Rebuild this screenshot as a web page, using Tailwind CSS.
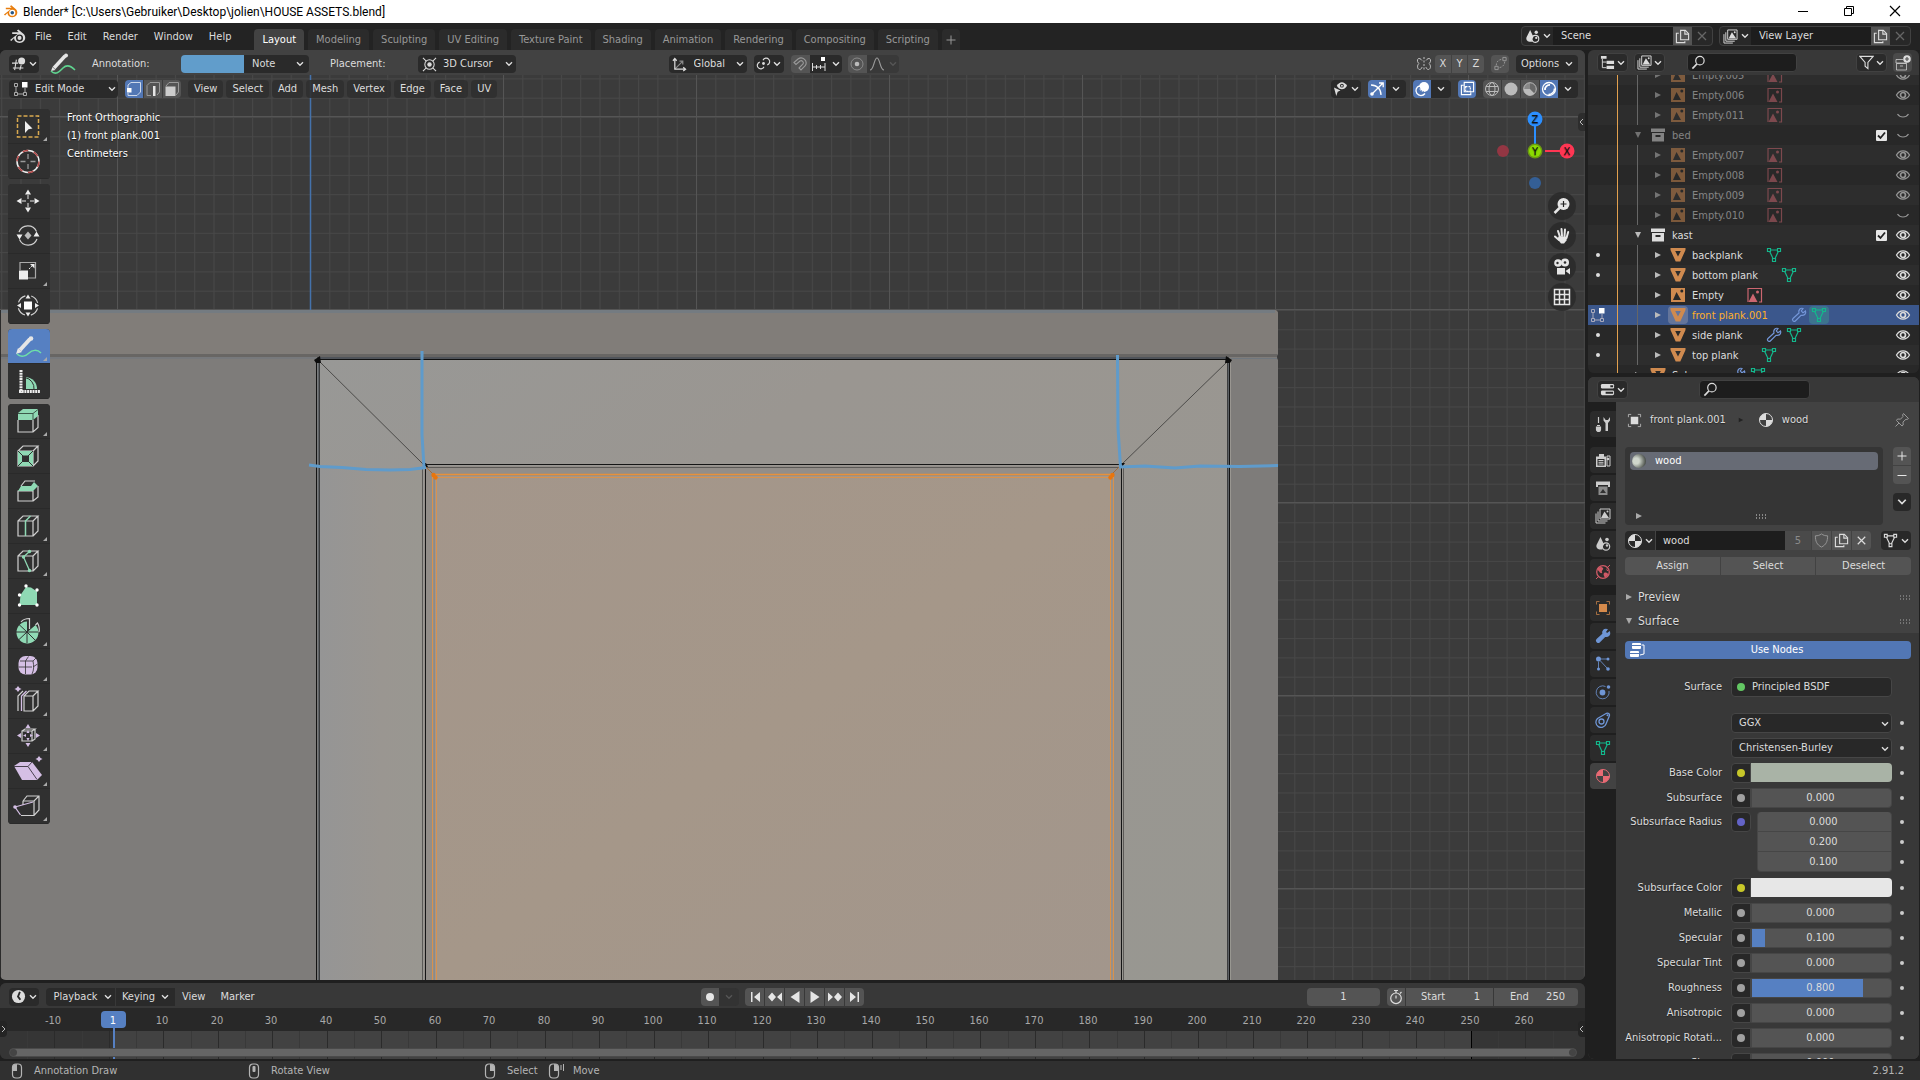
<!DOCTYPE html>
<html lang="en">
<head>
<meta charset="utf-8">
<title>Blender* [C:\Users\Gebruiker\Desktop\jolien\HOUSE ASSETS.blend]</title>
<script src="https://cdn.jsdelivr.net/npm/@tailwindcss/browser@4"></script>
</head>
<body class="h-screen overflow-hidden bg-[#1f1f1f] flex flex-col font-['DejaVu_Sans_Condensed','DejaVu_Sans',sans-serif] text-[11px] leading-[14px] text-[#dcdcdc]">

<!-- shared icon symbols -->
<svg class="hidden" aria-hidden="true">
  <defs>
    <symbol id="chev" viewBox="0 0 8 6"><path d="M1 1.2l3 3 3-3" fill="none" stroke="currentColor" stroke-width="1.4"/></symbol>
    <symbol id="logo" viewBox="0 0 16 16"><path d="M1 11.2L8.2 5.6H3V4h6.2L7.4 2.4 8.8 1.4l5 4.3c3 3 1.200 8.400-3.800 8.400-3.200 0-5.200-2-5.200-4.600L2.200 12.300z" fill="currentColor"/><circle cx="9.900" cy="9.300" r="3.300" fill="var(--ring,#232323)"/><circle cx="9.900" cy="9.300" r="1.900" fill="var(--dot,currentColor)"/></symbol>
    <symbol id="view3d" viewBox="0 0 16 16"><path d="M0 7h7M1 12.500h12M5 3L3 15M10.500 9L9 15" stroke="currentColor" stroke-width="1.200" fill="none"/><circle cx="11" cy="4.500" r="4" fill="currentColor"/></symbol>
    <symbol id="cursor3d" viewBox="0 0 16 16"><g fill="none" stroke="currentColor" stroke-width="1.100"><circle cx="8" cy="8" r="5"/><path d="M1 1l3.500 3.500M15 1l-3.500 3.500M1 15l3.500-3.500M15 15l-3.500-3.500"/></g><circle cx="8" cy="8" r="2.400" fill="currentColor"/></symbol>
    <symbol id="editmode" viewBox="0 0 16 16"><g fill="none" stroke="currentColor" stroke-width="1"><path d="M1.500 2.500h3v3h-3zM1.500 11.500h3v3h-3zM10.500 11.500h3v3h-3zM3 6v5M5 13h5M12 7v4"/></g><path d="M9 1h5.500v5.500H9z" fill="#fff"/></symbol>
    <symbol id="axes" viewBox="0 0 16 16"><g fill="none" stroke="currentColor" stroke-width="1.300"><path d="M3 2v11h11M1 4l2-2.500L5 4M12 11l2.500 2L12 15"/><path d="M3 13l8-8M8 4.500h3.500V8" opacity=".55"/></g></symbol>
    <symbol id="pivot" viewBox="0 0 16 16"><g fill="none" stroke="currentColor" stroke-width="1.200"><path d="M7.500 4.500A3.700 3.700 0 1 1 12 9.500"/><path d="M8.500 11.500A3.700 3.700 0 1 1 4 6.500"/></g><circle cx="8" cy="8" r="1.500" fill="currentColor"/></symbol>
    <symbol id="magnet" viewBox="0 0 16 16"><path d="M2 6.500L6 3a5 5 0 0 1 7 7l-4 4-2-2 4-4a2.200 2.200 0 0 0-3-3L4 8.500z" fill="none" stroke="currentColor" stroke-width="1.100"/></symbol>
    <symbol id="snapinc" viewBox="0 0 16 16"><path d="M1.500 7v8M14 7v8M1.500 11H14M5.500 9v4M9.500 9v4" fill="none" stroke="currentColor" stroke-width="1"/><path d="M10 1h4v4h-4z" fill="#fff"/></symbol>
    <symbol id="prop" viewBox="0 0 16 16"><circle cx="8" cy="8" r="6" fill="none" stroke="currentColor" opacity=".5"/><circle cx="8" cy="8" r="2.300" fill="currentColor"/></symbol>
    <symbol id="falloff" viewBox="0 0 16 16"><path d="M1 14C5 14 5 2 8 2s3 12 7 12" fill="none" stroke="currentColor" stroke-width="1.200"/></symbol>
    <symbol id="mirror" viewBox="0 0 16 16"><g fill="none" stroke="currentColor"><path d="M6 4.500C4 1.500 1 2 1.500 5c0 1 .8 2 1.500 2.500C1 9 1 13 3.500 13.500 5 13.500 6 12 6 11M10 4.500c2-3 5-2.500 4.500.5 0 1-.8 2-1.500 2.500 2 1.500 2 5.500-.5 6-1.500 0-2.500-1.500-2.500-2.500"/><path d="M8 1v14" stroke-dasharray="2 1.500"/></g></symbol>
    <symbol id="automerge" viewBox="0 0 16 16"><g fill="none" stroke="currentColor"><path d="M10.500 1.500h3.500v3.500h-3.500zM2 11h3.500v3.500H2z"/><path d="M12.500 6C12 11 9 12 6.500 12.500M3.500 10C3.500 6 6 4 9.500 3.500" stroke-dasharray="2 1.500"/></g></symbol>
    <symbol id="eye" viewBox="0 0 16 12"><path d="M1.500 6c3-5.500 10-5.500 13 0-3 5.500-10 5.500-13 0z" fill="none" stroke="currentColor" stroke-width="1.300"/><circle cx="8" cy="6" r="2.500" fill="none" stroke="currentColor" stroke-width="1.700"/></symbol>
    <symbol id="eyeclosed" viewBox="0 0 16 12"><path d="M2.500 5c2.500 4 8.500 4 11 0" fill="none" stroke="currentColor" stroke-width="1.200"/></symbol>
    <symbol id="eyecursor" viewBox="0 0 16 16"><path d="M4 5c3-5 8-5 11 0-3 5-8 5-11 0z" fill="currentColor"/><circle cx="9.500" cy="5" r="2" fill="#282828"/><circle cx="9.500" cy="5" r="1" fill="currentColor"/><path d="M1 7l7 3-3 1.500L3.500 16z" fill="currentColor"/></symbol>
    <symbol id="gizmo" viewBox="0 0 16 16"><g fill="none" stroke="currentColor" stroke-width="1.300"><path d="M3 13L14 2M10 2h4.200v4.200"/><path d="M2 4c6 0 10 4 10 10"/></g><circle cx="3" cy="13" r="1.800" fill="currentColor"/></symbol>
    <symbol id="overlay" viewBox="0 0 16 16"><circle cx="10" cy="6" r="5" fill="currentColor"/><path d="M5.500 4.800A5 5 0 1 0 11 12.500" fill="none" stroke="currentColor" stroke-width="1.300"/><path d="M5.500 6a4.500 4.500 0 0 0 4.500 4.500" stroke="#5277b5" fill="none" stroke-dasharray="2 1"/></symbol>
    <symbol id="xray" viewBox="0 0 16 16"><g fill="none" stroke="currentColor" stroke-width="1.200"><path d="M4.500 1.500h10v10h-10z"/><path d="M4 4.500H1.500v10h10V12"/><path d="M6 6h5v5H6z" stroke-dasharray="2 1"/></g></symbol>
    <symbol id="wire" viewBox="0 0 16 16"><g fill="none" stroke="currentColor"><circle cx="8" cy="8" r="6.500"/><ellipse cx="8" cy="8" rx="3" ry="6.500"/><path d="M2 5.500h12M2 10.500h12"/></g></symbol>
    <symbol id="solid" viewBox="0 0 16 16"><circle cx="8" cy="8" r="6.500" fill="currentColor"/></symbol>
    <symbol id="matprev" viewBox="0 0 16 16"><circle cx="8" cy="8" r="6.300" fill="none" stroke="currentColor"/><path d="M8 8V1.700A6.300 6.300 0 0 0 1.700 8z" fill="currentColor" opacity=".5"/><path d="M8 8V1.700A6.300 6.300 0 0 1 12.500 12.500z" fill="currentColor" opacity=".2"/><path d="M1.700 8H8l4.500 4.500A6.300 6.300 0 0 1 1.700 8z" fill="currentColor"/></symbol>
    <symbol id="rendered" viewBox="0 0 16 16"><circle cx="8" cy="8" r="6.500" fill="none" stroke="currentColor" stroke-width="1.300"/><path d="M4 9a4.500 4.500 0 0 1 5-5" fill="none" stroke="currentColor" stroke-width="1.800"/><path d="M13.500 7.500a6 6 0 0 1-6 6" stroke="currentColor" stroke-width="1.500" fill="none"/></symbol>
    <symbol id="scene" viewBox="0 0 16 16"><path d="M5.500 1L9 8.500C8 10 7 11 7.500 13.500H4.500A3.500 3.500 0 0 1 1.500 9z" fill="currentColor"/><circle cx="11" cy="10.500" r="3.700" fill="none" stroke="currentColor" stroke-width="1.200"/><circle cx="12" cy="3.500" r="1.800" fill="currentColor"/><circle cx="12" cy="9.500" r="1.200" fill="currentColor"/></symbol>
    <symbol id="layers" viewBox="0 0 16 16"><path d="M5 1h10v10H5z" fill="none" stroke="currentColor"/><path d="M6 10l3.500-6.500L14 10z" fill="currentColor"/><circle cx="12.500" cy="3.500" r="1" fill="currentColor"/><path d="M3 3.500v9.500h9.500M1 5.500V15h9.500" fill="none" stroke="currentColor"/></symbol>
    <symbol id="dup" viewBox="0 0 16 16"><g fill="none" stroke="currentColor" stroke-width="1.200"><path d="M6 1.500h5l3.500 3.500v6.500H6z"/><path d="M10.500 2v3.500H14"/><path d="M4 4.500H1.500v10h9V13"/></g></symbol>
    <symbol id="x" viewBox="0 0 16 16"><path d="M4 4l8 8M12 4l-8 8" stroke="currentColor" stroke-width="1.300" fill="none"/></symbol>
    <symbol id="tree" viewBox="0 0 16 16"><path d="M1 1h6v3H1zM7 6h8v3.500H7zM7 11.500h8V15H7z" fill="currentColor"/><path d="M2.500 4v9.500H7M2.500 7.500H7" stroke="currentColor" fill="none"/></symbol>
    <symbol id="search" viewBox="0 0 16 16"><circle cx="9.500" cy="6" r="4.500" fill="none" stroke="currentColor" stroke-width="1.300"/><path d="M6.300 9.500L1.500 14.500" stroke="currentColor" stroke-width="1.700"/></symbol>
    <symbol id="filter" viewBox="0 0 16 16"><path d="M1 1.500h14L9.500 8v6.500L6.500 12V8z" fill="none" stroke="currentColor" stroke-width="1.200"/></symbol>
    <symbol id="newcoll" viewBox="0 0 16 16"><path d="M1.500 8.500h10v6.500h-10zM1 4.500h7M1 4.500v3.500h11M5 11h3" fill="none" stroke="currentColor" opacity=".7"/><circle cx="12" cy="4" r="3.800" fill="currentColor"/><path d="M12 2v4M10 4h4" stroke="#545454" stroke-width="1.200"/></symbol>
    <symbol id="coll" viewBox="0 0 16 16"><path d="M1 1.500h14v3.500H1z" fill="currentColor"/><path fill-rule="evenodd" d="M2 6h12v8.500H2zM5.500 8v2h5V8z" fill="currentColor"/></symbol>
    <symbol id="empty" viewBox="0 0 16 16"><path fill-rule="evenodd" d="M1 1h14v14H1zM3 13h8L6.500 5z" fill="currentColor"/><circle cx="11.800" cy="4" r="1.500" fill="#282828"/></symbol>
    <symbol id="image" viewBox="0 0 16 16"><path d="M1 15V1.500h13.500V15H12" fill="none" stroke="currentColor" stroke-width="1.200"/><path d="M1.500 15L6 6.500 10.500 15z" fill="currentColor"/><circle cx="10.500" cy="5" r="1.500" fill="currentColor"/></symbol>
    <symbol id="meshobj" viewBox="0 0 16 16"><path fill-rule="evenodd" d="M.5 1h15v2L10.300 14.500H5.700L.5 3zM5.200 4L8 9.500 10.800 4z" fill="currentColor"/></symbol>
    <symbol id="mesh" viewBox="0 0 16 16"><g fill="none" stroke="currentColor" stroke-width="1.200"><path d="M1.500 1.500h3v3h-3zM11.500 1.500h3v3h-3zM6.500 11.500h3v3h-3zM4.500 3h7M3.700 4.500l3.300 7M12.300 4.500l-3.300 7"/></g></symbol>
    <symbol id="wrench" viewBox="0 0 16 16"><path d="M14.500 4L12 5.800 10.300 4 12 1.500C9.500.5 7 3 8 6L2 11.500c-1.500 1.500.8 4 2.300 2.500L10 8.300c3 .7 5.500-1.500 4.500-4.300z" fill="var(--wf,none)" stroke="currentColor" stroke-width="1.200"/></symbol>
    <symbol id="props" viewBox="0 0 16 16"><rect x="1" y="2" width="14" height="5" rx="1.500" fill="currentColor"/><rect x="1" y="9" width="14" height="5" rx="1.500" fill="currentColor"/><path d="M11 3.500h3v2h-3zM6 10.500h8v2H6z" fill="#282828"/></symbol>
    <symbol id="material" viewBox="0 0 16 16"><circle cx="8" cy="8" r="6.500" fill="none" stroke="currentColor"/><path d="M8 8V1.500A6.500 6.500 0 0 0 1.500 8zM8 8h6.500A6.500 6.500 0 0 1 8 14.500z" fill="currentColor"/></symbol>
    <symbol id="object" viewBox="0 0 16 16"><path d="M4 4h8v8H4z" fill="currentColor"/><path d="M1.500 4.500v-3h3M11.500 1.500h3v3M14.500 11.500v3h-3M4.500 14.500h-3v-3" fill="none" stroke="currentColor" opacity=".7"/></symbol>
    <symbol id="pin" viewBox="0 0 16 16"><path d="M9.500 1.500l5 5-1.500 1-1-.3L9 10l.2 3L8 14 2.500 8.500 3.500 7l3 .2L9 4.500 8.600 3zM5 11L1.500 14.500" fill="none" stroke="currentColor"/></symbol>
    <symbol id="shield" viewBox="0 0 16 16"><path d="M8 1c2 1.500 4 2 6.500 2 0 6-1.500 9.500-6.500 12C3 12.500 1.500 9 1.500 3 4 3 6 2.500 8 1z" fill="none" stroke="currentColor"/></symbol>
    <symbol id="tool" viewBox="0 0 16 16"><path d="M3.500 1v6M2 9.500h3M1.500 11h4v2.500a2 2 0 0 1-4 0z" stroke="currentColor" stroke-width="1.200" fill="currentColor"/><path d="M8.500 1v3.500L10.500 7v8h2.500V7l2-2.500V1L13 4h-2.300z" fill="currentColor"/></symbol>
    <symbol id="render" viewBox="0 0 16 16"><path fill-rule="evenodd" d="M1 4.500h3V2h5v2.500h2V15H1zM2.500 7v6.500h7V7z" fill="currentColor"/><path d="M3.500 8.500h5M3.500 10.300h5M3.500 12h5" stroke="currentColor"/><path d="M12 4h3v10h-3z" fill="none" stroke="currentColor"/><circle cx="13" cy="7" r="1.300" fill="currentColor"/></symbol>
    <symbol id="output" viewBox="0 0 16 16"><path d="M1 1.500h14V7h-2V5H3v2H1z" fill="currentColor"/><path d="M3.500 6.500h9V15h-9z" fill="currentColor" opacity=".6"/><path d="M5 13l3-4 3 4z" fill="#303030"/></symbol>
    <symbol id="world" viewBox="0 0 16 16"><circle cx="8" cy="8" r="6.300" fill="none" stroke="currentColor" stroke-width="1.300"/><path d="M3 4c2-1.500 4-1.500 5 0s-2 2.500-1 4-2 1.500-2.500 0S2 7 3 4zM9 9c2-1 4 0 4 1.500S10 14 9.500 13 8 10 9 9zM11 4l2.500 3L12 7z" fill="currentColor"/><path d="M13 3l2-2M1 15l2-2" stroke="currentColor"/></symbol>
    <symbol id="particles" viewBox="0 0 16 16"><circle cx="3.500" cy="3" r="2.500" fill="currentColor"/><g stroke="currentColor" fill="none" opacity=".8"><path d="M3.500 5.500V12M5.500 3H12M5.500 5l6.500 7"/></g><circle cx="3.500" cy="13" r="1.500" fill="currentColor"/><circle cx="13" cy="3" r="1.500" fill="currentColor"/><circle cx="13" cy="13" r="1.800" fill="currentColor"/></symbol>
    <symbol id="physics" viewBox="0 0 16 16"><circle cx="7.500" cy="8.500" r="2.900" fill="currentColor"/><path d="M10.500 2.500a6.500 6.500 0 1 0 3.500 4.500" fill="none" stroke="currentColor" opacity=".8"/><circle cx="13.500" cy="3" r="1.800" fill="currentColor"/></symbol>
    <symbol id="constraint" viewBox="0 0 16 16"><g fill="none" stroke="currentColor" stroke-width="1.300"><path d="M2.500 6.500L11.500 1.300c2-.8 3.500 1 2.800 2.700L11 12a5.200 5.200 0 1 1-8.500-5.500z"/><circle cx="6.500" cy="9.500" r="2.500"/></g><circle cx="12.500" cy="3.200" r="1" fill="currentColor"/></symbol>
    <symbol id="nodes" viewBox="0 0 16 16"><rect x="3" y="1" width="9" height="6" rx="1" fill="currentColor"/><rect x="1" y="9" width="9" height="6" rx="1" fill="currentColor"/><path d="M12.500 3H15v9l-4 1" fill="none" stroke="currentColor"/><path d="M3 3.500h9M1 11.500h9" stroke="#5277b5"/></symbol>
    <symbol id="clock" viewBox="0 0 16 16"><circle cx="8" cy="8" r="7" fill="currentColor"/><path d="M9.500 3L7.500 8l2.500 3.500" fill="none" stroke="#282828" stroke-width="2"/></symbol>
    <symbol id="stopwatch" viewBox="0 0 16 16"><g fill="none" stroke="currentColor" stroke-width="1.200"><circle cx="8" cy="9.300" r="5.300"/><path d="M8 9.500V6.500M6 1.500h4M8 1.500v2.500M12 4.500l1.500-1.500"/></g></symbol>
    <symbol id="mouse" viewBox="0 0 12 16"><rect x="1.500" y="1" width="9" height="14" rx="3.500" fill="none" stroke="currentColor" stroke-width="1.200"/></symbol>
    <symbol id="tri" viewBox="0 0 8 8"><path d="M1 1l6 3-6 3z" fill="currentColor"/></symbol>
    <symbol id="trid" viewBox="0 0 8 8"><path d="M1 1h6L4 7z" fill="currentColor"/></symbol>
    <symbol id="grip" viewBox="0 0 12 5"><path d="M1 1h10M1 4h10" stroke="currentColor" stroke-dasharray="1 2"/></symbol>
  </defs>
</svg>

<!-- window title -->
<header class="h-[23px] shrink-0 bg-white text-black flex items-center pl-[3px] font-[Roboto,sans-serif] text-[12px]">
  <svg class="size-[15px] mr-[5px] text-[#e87d0d] [--dot:#265787] [--ring:#fff]"><use href="#logo"/></svg>
  <h1>Blender* [C:\Users\Gebruiker\Desktop\jolien\HOUSE ASSETS.blend]</h1>
  <div class="ml-auto flex items-center gap-[34px] pr-[19px] pb-[2px]">
    <button aria-label="Minimize"><svg class="size-[12px]" viewBox="0 0 12 12"><path d="M1 6.500h10" stroke="#000"/></svg></button>
    <button aria-label="Restore"><svg class="size-[12px]" viewBox="0 0 12 12"><path d="M1.500 3.500h7v7h-7zM3.500 3V1.500h7v7H9" fill="none" stroke="#000"/></svg></button>
    <button aria-label="Close"><svg class="size-[12px]" viewBox="0 0 12 12"><path d="M1 1l10 10M11 1L1 11" stroke="#000" stroke-width="1.200"/></svg></button>
  </div>
</header>

<!-- top bar -->
<div class="h-[27px] shrink-0 bg-[#232323] flex items-center pl-[9px] pr-[9px]">
  <svg class="size-[17px] mr-[9px]"><use href="#logo"/></svg>
  <nav class="flex gap-4">
    <button>File</button><button>Edit</button><button>Render</button><button>Window</button><button>Help</button>
  </nav>
  <nav id="tabs" class="ml-[23px] mt-[6px] h-[21px] flex gap-1" role="tablist"></nav>
  <div class="ml-auto flex gap-[6px] mb-px">
    <div class="flex h-5 rounded border border-[#414141] bg-[#282828] overflow-hidden">
      <button class="w-[31px] flex items-center justify-center gap-[3px]" aria-label="Browse scenes"><svg class="size-[15px]"><use href="#scene"/></svg><svg class="w-2 h-[6px]"><use href="#chev"/></svg></button>
      <input aria-label="Scene" value="Scene" class="w-[120px] bg-[#1d1d1d] px-2 outline-none">
      <button class="w-[19px] bg-[#545454] grid place-items-center" aria-label="New scene"><svg class="size-[15px]"><use href="#dup"/></svg></button>
      <button class="w-[20px] grid place-items-center text-[#666]" aria-label="Delete scene"><svg class="size-4"><use href="#x"/></svg></button>
    </div>
    <div class="flex h-5 rounded border border-[#414141] bg-[#282828] overflow-hidden">
      <button class="w-[31px] flex items-center justify-center gap-[3px]" aria-label="Browse view layers"><svg class="size-[15px]"><use href="#layers"/></svg><svg class="w-2 h-[6px]"><use href="#chev"/></svg></button>
      <input aria-label="View Layer" value="View Layer" class="w-[120px] bg-[#1d1d1d] px-2 outline-none">
      <button class="w-[19px] bg-[#545454] grid place-items-center" aria-label="New view layer"><svg class="size-[15px]"><use href="#dup"/></svg></button>
      <button class="w-[20px] grid place-items-center text-[#666]" aria-label="Delete view layer"><svg class="size-4"><use href="#x"/></svg></button>
    </div>
  </div>
</div>

<div class="flex-1 min-h-0 flex gap-[3px] pr-px pb-[2px] bg-[#1f1f1f]">
  <!-- left: viewport and timeline -->
  <div class="flex-1 min-w-0 flex flex-col gap-[3px]">
    <main class="flex-1 min-h-0 flex flex-col rounded-md overflow-hidden bg-[#3b3b3b]">
      <!-- tool settings -->
      <div class="h-[25px] shrink-0 bg-[#424242] flex items-center pl-[9px] pr-[7px] pt-[2px]">
        <div class="flex-1 flex items-center">
          <button class="w-[30px] h-[18px] rounded bg-[#2a2a2a] flex items-center justify-center gap-[3px]" aria-label="Editor type"><svg class="size-[14px]"><use href="#view3d"/></svg><svg class="w-2 h-[6px]"><use href="#chev"/></svg></button>
          <svg class="ml-[11px] w-[26px] h-[22px]" viewBox="0 0 26 22"><path d="M4 15L15 3" stroke="#e6e6e6" stroke-width="3.500"/><path d="M1 18l1.500-4 3 3z" fill="#e6e6e6"/><circle cx="16" cy="2.500" r="2" fill="#e6e6e6"/><path d="M1 18c5 5 9 0 12-3s7-3 12 2" fill="none" stroke="#5fd38f" stroke-width="1.600"/></svg>
          <label for="anno" class="ml-4 w-[89px]">Annotation:</label>
          <input type="text" readonly aria-label="Annotation color" class="w-[63px] h-[18px] rounded-l bg-[#619dcb]">
          <div class="relative"><select id="anno" class="block w-[65px] h-[18px] rounded-r bg-[#2a2a2a] appearance-none pl-2 outline-none"><option>Note</option></select><svg class="absolute right-[5px] top-[6px] w-2 h-[6px] pointer-events-none"><use href="#chev"/></svg></div>
          <label for="place" class="ml-[21px] w-[88px]">Placement:</label>
          <div class="relative"><svg class="absolute left-1 top-[2px] size-[15px]"><use href="#cursor3d"/></svg><select id="place" class="block w-[98px] h-[18px] rounded bg-[#2a2a2a] appearance-none pl-[25px] outline-none"><option>3D Cursor</option></select><svg class="absolute right-[3px] top-[6px] w-2 h-[6px] pointer-events-none"><use href="#chev"/></svg></div>
        </div>
        <div class="flex items-center mr-5">
          <div class="relative"><svg class="absolute left-[3px] top-[2px] size-[15px] z-10"><use href="#axes"/></svg><select aria-label="Transform orientation" class="relative block w-[78px] h-[18px] rounded bg-[#2a2a2a] appearance-none pl-[25px] outline-none"><option>Global</option></select><svg class="absolute right-[3px] top-[6px] w-2 h-[6px] pointer-events-none"><use href="#chev"/></svg></div>
          <button class="ml-[7px] w-[30px] h-[18px] rounded bg-[#2a2a2a] flex items-center justify-center gap-[2px]" aria-label="Pivot point"><svg class="size-[15px]"><use href="#pivot"/></svg><svg class="w-2 h-[6px]"><use href="#chev"/></svg></button>
          <button class="ml-[7px] w-[19px] h-[18px] rounded-l bg-[#545454] grid place-items-center text-[#999]" aria-label="Snap"><svg class="size-4"><use href="#magnet"/></svg></button>
          <button class="w-[32px] h-[18px] rounded-r bg-[#2a2a2a] flex items-center justify-center gap-[5px]" aria-label="Snapping"><svg class="size-4"><use href="#snapinc"/></svg><svg class="w-2 h-[6px]"><use href="#chev"/></svg></button>
          <button class="ml-[6px] w-[19px] h-[18px] rounded-l bg-[#545454] grid place-items-center text-[#bbb]" aria-label="Proportional editing"><svg class="size-4"><use href="#prop"/></svg></button>
          <button class="w-[32px] h-[18px] rounded-r bg-[#393939] flex items-center justify-center gap-[4px] text-[#999]" aria-label="Falloff"><svg class="size-4"><use href="#falloff"/></svg><svg class="w-2 h-[6px] text-[#555]"><use href="#chev"/></svg></button>
        </div>
        <div class="flex-1 flex items-center justify-end">
          <svg class="size-4 text-[#c0c0c0] mr-[3px]"><use href="#mirror"/></svg>
          <div class="flex gap-px"><button class="w-[16px] h-[18px] rounded-l bg-[#545454]">X</button><button class="w-[15px] h-[18px] bg-[#545454]">Y</button><button class="w-[16px] h-[18px] rounded-r bg-[#545454]">Z</button></div>
          <button class="ml-[7px] w-[18px] h-[18px] rounded bg-[#545454] grid place-items-center text-[#999]" aria-label="Auto merge"><svg class="size-[15px]"><use href="#automerge"/></svg></button>
          <button class="ml-[7px] w-[62px] h-[18px] rounded bg-[#2a2a2a] flex items-center justify-center gap-[6px]">Options<svg class="w-2 h-[6px]"><use href="#chev"/></svg></button>
        </div>
      </div>

      <!-- 3D viewport -->
      <div class="relative flex-1 min-h-0">
        <svg class="absolute inset-0 w-full h-full" viewBox="0 75 1585 905" preserveAspectRatio="xMidYMid slice">
          <defs>
            <pattern id="minor" patternUnits="userSpaceOnUse" x="117" y="117" width="19.300" height="19.300"><path d="M.5 0V19.300M0 .5H19.300" stroke="#484848"/></pattern>
            <pattern id="major" patternUnits="userSpaceOnUse" x="117" y="116" width="193" height="193"><path d="M.5 0V193M0 .5H193" stroke="#555"/></pattern>
            <linearGradient id="face" x1="0" y1="0" x2="1" y2="1"><stop offset="0" stop-color="#989896"/><stop offset=".3" stop-color="#9a9691"/><stop offset="1" stop-color="#989791"/></linearGradient>
            <linearGradient id="stile" x1="0" x2="1"><stop offset="0" stop-color="#959595"/><stop offset=".6" stop-color="#9a9691"/><stop offset="1" stop-color="#999791"/></linearGradient>
            <linearGradient id="panel" x1="0" y1="0" x2="1" y2="1"><stop offset="0" stop-color="#a3968b"/><stop offset=".5" stop-color="#a59789"/><stop offset="1" stop-color="#a2968c"/></linearGradient>
          </defs>
          <rect y="75" width="1585" height="905" fill="#3b3b3b"/>
          <rect y="75" width="1585" height="905" fill="url(#minor)"/>
          <rect y="75" width="1585" height="905" fill="url(#major)"/>
          <path d="M310.500 75V310" stroke="#4472ab" stroke-width="1.500"/>
          <path d="M1 310H1274q4 0 4 4V354q-2 3 0 6V980H1z" fill="#7e7c7a"/>
          <path d="M1 310H1274q4 0 4 4V354H1z" fill="#817d79"/>
          <path d="M1 311.500H1275" stroke="#747b81" stroke-width="3"/>
          <path d="M1 355.500H1277" stroke="#686664" stroke-width="3"/>
          <path d="M1 358H316M1231 358.500H1277" stroke="#70777e"/>
          <rect x="317" y="359" width="914" height="621" fill="url(#face)"/>
          <rect x="320" y="468" width="103" height="512" fill="url(#stile)"/>
          <path d="M317 358.500H1229" stroke="#50545a" stroke-width="3"/>
          <path d="M317 359.500H1229" stroke="#111"/>
          <path d="M318.500 360V980M1228.500 360V980" stroke="#5d6165" stroke-width="2"/>
          <path d="M316.500 360V980M1229.500 360V980" stroke="#141414"/>
          <path d="M319.500 360V980M1227.500 360V980" stroke="#3c3d3e"/>
          <rect x="424" y="466" width="698" height="514" fill="#938e89"/>
          <path d="M425 464.500H1122M425.500 464V980M1121.500 464V980" stroke="#151515"/>
          <path d="M425 467.500H1122M422.500 468V980M1123.500 468V980" stroke="#5c5a57"/>
          <rect x="434" y="476" width="679" height="504" fill="url(#panel)"/>
          <path d="M434 474.500H1112" stroke="#e8913a" stroke-width="1.500"/>
          <path d="M436 477.500H1110M432.500 476V980M436.500 478V980M1113.500 476V980M1110.500 478V980" stroke="#d8924e"/>
          <path d="M434.500 478V980M1112 478V980" stroke="#8b8a8a"/>
          <path d="M319 361L424 465M1228 361L1121 465" stroke="#4c4b49"/>
          <path d="M424 465l10 10M1121 465l-10 10" stroke="#a06a3a"/>
          <g fill="#0c0c0c"><path d="M314 360l6-4 1 7h-5zM1232 360l-6-4-1 7h5zM422 463h4l2 4h-3zM1125 463h-4l-2 4h3z"/></g>
          <g fill="#e8750d"><circle cx="433.500" cy="475" r="2.200"/><circle cx="435.500" cy="477.500" r="2.200"/><circle cx="1112.500" cy="475" r="2.200"/><circle cx="1110.500" cy="477.500" r="2.200"/></g>
          <g fill="none" stroke="#5f9bcb" stroke-width="3"><path d="M422 351V435L424 467M309 465l11 1.500 22 1 24 2 24 .5 20-.5 16-2"/><path d="M1117.500 355L1118 428 1120.500 467 1145 466 1175 468 1200 466 1240 466.500 1278 465.500"/></g>
          <path d="M.5 310V980" stroke="#2b2b2b"/>
        </svg>

        <div class="relative h-full flex flex-col [text-shadow:0_1px_1px_#0009]">
          <div class="h-[25px] shrink-0 flex items-center pl-[9px] pr-[7px] pt-[2px]">
            <div class="relative mr-[7px]"><svg class="absolute left-1 top-px size-4 z-10 text-[#aaa]"><use href="#editmode"/></svg><select aria-label="Mode" class="relative block w-[109px] h-[18px] rounded bg-[#2a2a2a] appearance-none pl-[26px] outline-none"><option>Edit Mode</option></select><svg class="absolute right-[2px] top-[6px] w-2 h-[6px] pointer-events-none"><use href="#chev"/></svg></div>
            <div class="flex gap-px h-[18px] mr-[7px]">
              <button class="w-[18px] rounded-l bg-[#5277b5] grid place-items-center" aria-label="Vertex select"><svg class="size-4" viewBox="0 0 16 16"><path d="M2 8V4l3-2.500h9.500V11L11 14.500H2V12" fill="none" stroke="#cdd8ea"/><path d="M1 7h4.500v4.500H1z" fill="#fff"/></svg></button>
              <button class="w-[18px] bg-[#545454] grid place-items-center" aria-label="Edge select"><svg class="size-4" viewBox="0 0 16 16"><path d="M6 14.500H2V4.500l3-3h9.500V11L12 14" fill="none" stroke="#999"/><path d="M8 5h2.500v10H8z" fill="#e6e6e6"/></svg></button>
              <button class="w-[18px] rounded-r bg-[#545454] grid place-items-center" aria-label="Face select"><svg class="size-4" viewBox="0 0 16 16"><path d="M2 5l3-3.500h9.500V11L12 14" fill="none" stroke="#999"/><path d="M1.500 5.500h10v9.500h-10z" fill="#ccc"/></svg></button>
            </div>
            <nav id="vmenu" class="flex gap-[3px] h-[18px]"></nav>
            <div class="ml-auto flex h-[18px]">
              <button class="w-[30px] rounded bg-[#2a2a2a] flex items-center justify-center gap-[3px]" aria-label="Object types visibility"><svg class="size-[15px]"><use href="#eyecursor"/></svg><svg class="w-2 h-[6px]"><use href="#chev"/></svg></button>
              <button class="ml-[7px] w-[18px] rounded-l bg-[#5277b5] grid place-items-center text-white" aria-label="Gizmos"><svg class="size-4"><use href="#gizmo"/></svg></button>
              <button class="w-[20px] rounded-r bg-[#2a2a2a] grid place-items-center" aria-label="Gizmo options"><svg class="w-2 h-[6px]"><use href="#chev"/></svg></button>
              <button class="ml-[7px] w-[18px] rounded-l bg-[#5277b5] grid place-items-center text-white" aria-label="Overlays"><svg class="size-4"><use href="#overlay"/></svg></button>
              <button class="w-[20px] rounded-r bg-[#2a2a2a] grid place-items-center" aria-label="Overlay options"><svg class="w-2 h-[6px]"><use href="#chev"/></svg></button>
              <button class="ml-[7px] w-[18px] rounded bg-[#5277b5] grid place-items-center text-white" aria-label="X-Ray"><svg class="size-[15px]"><use href="#xray"/></svg></button>
              <button class="ml-[7px] w-[18px] rounded-l bg-[#545454] grid place-items-center text-[#bbb]" aria-label="Wireframe"><svg class="size-4"><use href="#wire"/></svg></button>
              <button class="ml-px w-[18px] bg-[#545454] grid place-items-center text-[#bbb]" aria-label="Solid"><svg class="size-4"><use href="#solid"/></svg></button>
              <button class="ml-px w-[18px] bg-[#545454] grid place-items-center text-[#bbb]" aria-label="Material preview"><svg class="size-4"><use href="#matprev"/></svg></button>
              <button class="ml-px w-[18px] bg-[#5277b5] grid place-items-center text-white" aria-label="Rendered"><svg class="size-4"><use href="#rendered"/></svg></button>
              <button class="w-[20px] rounded-r bg-[#2a2a2a] grid place-items-center" aria-label="Shading options"><svg class="w-2 h-[6px]"><use href="#chev"/></svg></button>
            </div>
          </div>
          <div class="flex items-start pl-2 pr-[9px] pt-[9px]">
            <div id="toolbar" class="flex flex-col gap-[5px] w-[42px]"></div>
            <div class="ml-[17px] leading-[18px] text-white">
              <p>Front Orthographic</p><p>(1) front plank.001</p><p>Centimeters</p>
            </div>
            <div class="ml-auto flex flex-col items-end gap-[2px] pt-px">
              <svg class="w-[82px] h-[80px]" viewBox="0 0 82 80">
                <path d="M41 16V34" stroke="#2c8fff" stroke-width="2"/><path d="M51 41H66" stroke="#ff3653" stroke-width="2"/>
                <circle cx="41" cy="9" r="7.500" fill="#2c8fff"/><circle cx="41" cy="41" r="7.500" fill="#6b9a12"/><circle cx="41" cy="41" r="6" fill="#8bdc00"/><circle cx="73" cy="41" r="7.500" fill="#ff3653"/><circle cx="9" cy="41" r="6" fill="#933643"/><circle cx="41" cy="73" r="6" fill="#345f96"/>
                <g text-anchor="middle" fill="#111" font-size="11"><text x="41" y="13">Z</text><text x="41" y="45">Y</text><text x="73" y="45">X</text></g>
              </svg>
              <button class="size-7 rounded-full bg-[#2b2b2b]/90 grid place-items-center" aria-label="Zoom"><svg class="size-[18px]" viewBox="0 0 18 18"><circle cx="10.500" cy="7" r="6" fill="#e6e6e6"/><path d="M6.500 11L1.500 16" stroke="#e6e6e6" stroke-width="2.500"/><path d="M7.500 7h6M10.500 4v6" stroke="#222" stroke-width="1.200"/></svg></button>
              <button class="size-7 rounded-full bg-[#2b2b2b]/90 grid place-items-center" aria-label="Pan"><svg class="size-[18px]" viewBox="0 0 18 18"><g stroke="#e6e6e6" stroke-width="2" stroke-linecap="round" fill="none"><path d="M5 4l2 6M8.500 2l.5 7M12 2.500L11.500 9M15.200 5L13.500 11M2 9.500L6 13"/></g><path d="M5.500 9.500h8.500l-.5 4-2.500 3H8L4.500 12z" fill="#e6e6e6"/></svg></button>
              <button class="mt-px size-7 rounded-full bg-[#2b2b2b]/90 grid place-items-center" aria-label="Camera view"><svg class="size-[18px]" viewBox="0 0 18 18"><circle cx="5" cy="5" r="3.800" fill="#e6e6e6"/><circle cx="12" cy="4.500" r="4" fill="#e6e6e6"/><circle cx="4.500" cy="5" r="1.200" fill="#2b2b2b"/><circle cx="12" cy="4.500" r="1.300" fill="#2b2b2b"/><path d="M4 10h8v6.500H4zM12.500 13l4.500-3v6.500z" fill="#e6e6e6"/></svg></button>
              <button class="size-7 rounded-full bg-[#2b2b2b]/90 grid place-items-center" aria-label="Toggle orthographic"><svg class="size-[18px]" viewBox="0 0 18 18"><path d="M1.500 1.500h15v15h-15zM6.500 1.500v15M11.500 1.500v15M1.500 6.500h15M1.500 11.500h15" fill="none" stroke="#e6e6e6" stroke-width="1.500"/></svg></button>
            </div>
          </div>
        </div>
        <button class="absolute right-0 top-[38px] w-[7px] h-[18px] rounded-l bg-[#2d2d2d] grid place-items-center" aria-label="Show sidebar"><svg class="w-[5px] h-2" viewBox="0 0 5 8"><path d="M4 1L1 4l3 3" fill="none" stroke="#bbb"/></svg></button>
      </div>
    </main>

    <!-- timeline -->
    <section class="h-[76px] shrink-0 rounded-md overflow-hidden bg-[#303030] flex flex-col">
      <div class="h-[25px] shrink-0 bg-[#383838] flex items-center pl-[9px] pr-[7px] pt-[2px]">
        <div class="flex-1 flex items-center">
          <button class="w-[30px] h-[18px] rounded bg-[#2a2a2a] flex items-center justify-center gap-[3px]" aria-label="Editor type"><svg class="size-[15px]"><use href="#clock"/></svg><svg class="w-2 h-[6px]"><use href="#chev"/></svg></button>
          <div class="ml-[7px] flex h-[18px] gap-px">
            <button class="w-[69px] rounded-l bg-[#2a2a2a] flex items-center justify-center gap-[6px] pl-1">Playback<svg class="w-2 h-[6px]"><use href="#chev"/></svg></button>
            <button class="w-[59px] bg-[#2a2a2a] flex items-center justify-center gap-[6px]">Keying<svg class="w-2 h-[6px]"><use href="#chev"/></svg></button>
          </div>
          <button class="ml-[7px]">View</button><button class="ml-[15px]">Marker</button>
        </div>
        <div class="flex items-center mr-[22px] h-[18px]">
          <button class="w-[18px] h-full rounded-l bg-[#545454] grid place-items-center" aria-label="Auto keying"><span class="size-2 rounded-full bg-[#e6e6e6]"></span></button>
          <button class="w-[20px] h-full rounded-r bg-[#333] grid place-items-center text-[#555]" aria-label="Keying options"><svg class="w-2 h-[6px]"><use href="#chev"/></svg></button>
          <div id="transport" class="ml-[6px] flex gap-px h-full text-[#e6e6e6]"></div>
        </div>
        <div class="flex-1 flex items-center justify-end h-[18px]">
          <input aria-label="Current frame" value="1" class="w-[73px] h-full rounded bg-[#545454] text-center outline-none">
          <button class="ml-[7px] w-[18px] h-full rounded-l bg-[#545454] grid place-items-center" aria-label="Use preview range"><svg class="size-4"><use href="#stopwatch"/></svg></button>
          <label class="ml-px w-[87px] h-full bg-[#545454] flex items-center pl-[15px] pr-[13px]">Start<input value="1" class="min-w-0 flex-1 bg-transparent text-right outline-none"></label>
          <label class="ml-px w-[84px] h-full rounded-r bg-[#545454] flex items-center pl-4 pr-[13px]">End<input value="250" class="min-w-0 flex-1 bg-transparent text-right outline-none"></label>
        </div>
      </div>
      <div class="relative flex-1">
        <svg id="ruler" class="absolute inset-0 w-full h-full" role="img" aria-label="Frame ruler"></svg>
        <div class="absolute left-[9px] right-[8px] bottom-[2px] h-[9px] rounded-full bg-[#656565] border border-[#4a4a4a] flex justify-between items-center"><span class="size-[7px] rounded-full bg-[#444]"></span><span class="size-[7px] rounded-full bg-[#444]"></span></div>
        <button class="absolute left-0 top-[13px] w-[7px] h-[16px] rounded-r bg-[#242424] grid place-items-center" aria-label="Show channels"><svg class="w-[5px] h-2" viewBox="0 0 5 8"><path d="M1 1l3 3-3 3" fill="none" stroke="#bbb"/></svg></button>
        <button class="absolute right-0 top-[13px] w-[7px] h-[16px] rounded-l bg-[#242424] grid place-items-center" aria-label="Show sidebar"><svg class="w-[5px] h-2" viewBox="0 0 5 8"><path d="M4 1L1 4l3 3" fill="none" stroke="#bbb"/></svg></button>
      </div>
    </section>
  </div>

  <!-- right: outliner and properties -->
  <div class="w-[331px] shrink-0 flex flex-col gap-1">
    <section class="h-[323px] shrink-0 rounded-md overflow-hidden bg-[#282828] flex flex-col">
      <div class="h-[25px] shrink-0 bg-[#383838] flex items-center pl-[9px] pr-[7px]">
        <button class="w-[31px] h-[19px] rounded border border-[#414141] bg-[#2a2a2a] flex items-center justify-center gap-[2px]" aria-label="Editor type"><svg class="size-[15px]"><use href="#tree"/></svg><svg class="w-2 h-[6px]"><use href="#chev"/></svg></button>
        <button class="ml-[6px] w-[31px] h-[19px] rounded border border-[#414141] bg-[#2a2a2a] flex items-center justify-center gap-[2px]" aria-label="Display mode"><svg class="size-[15px]"><use href="#layers"/></svg><svg class="w-2 h-[6px]"><use href="#chev"/></svg></button>
        <div class="relative ml-[22px]"><svg class="absolute left-1 top-[2px] size-[15px] z-10"><use href="#search"/></svg><input type="search" aria-label="Filter outliner" class="block w-[110px] h-[19px] rounded border border-[#414141] bg-[#1d1d1d] pl-6 outline-none"></div>
        <button class="ml-auto w-[31px] h-[19px] rounded border border-[#414141] bg-[#2a2a2a] flex items-center justify-center gap-[2px]" aria-label="Filter"><svg class="size-[15px]"><use href="#filter"/></svg><svg class="w-2 h-[6px]"><use href="#chev"/></svg></button>
        <button class="ml-[6px] w-[19px] h-[19px] rounded bg-[#4a4a4a] grid place-items-center" aria-label="New collection"><svg class="size-4"><use href="#newcoll"/></svg></button>
      </div>
      <div class="relative flex-1 min-h-0 overflow-hidden">
        <ul id="outliner" class="-mt-[10px]"></ul>
        <span class="absolute left-[29px] top-0 bottom-0 w-px bg-[#e2a04e]"></span>
      </div>
    </section>

    <section class="flex-1 min-h-0 rounded-md overflow-hidden bg-[#424242] flex flex-col">
      <div class="h-[25px] shrink-0 bg-[#383838] flex items-center pl-[9px]">
        <button class="w-[31px] h-[19px] rounded border border-[#414141] bg-[#2a2a2a] flex items-center justify-center gap-[2px]" aria-label="Editor type"><svg class="size-[15px]"><use href="#props"/></svg><svg class="w-2 h-[6px]"><use href="#chev"/></svg></button>
        <div class="relative ml-[71px]"><svg class="absolute left-1 top-[2px] size-[15px] z-10"><use href="#search"/></svg><input type="search" aria-label="Search properties" class="block w-[111px] h-[19px] rounded border border-[#414141] bg-[#1d1d1d] pl-6 outline-none"></div>
      </div>
      <div class="flex-1 min-h-0 flex">
        <nav id="ptabs" class="w-7 shrink-0 bg-[#1f1f1f] pl-[2px] pt-[9px] flex flex-col gap-[2px]"></nav>
        <div class="flex-1 min-w-0 flex flex-col overflow-hidden [text-shadow:0_1px_1px_#0006]">
          <div class="pl-[9px] pr-2 pb-[10px]">
            <div class="h-9 flex items-center pl-[2px] pr-px">
              <svg class="size-[15px] mr-2"><use href="#object"/></svg>front plank.001
              <svg class="size-[6px] ml-[12px] mr-[14px] text-[#222]"><use href="#tri"/></svg>
              <svg class="size-4 mr-2"><use href="#material"/></svg>wood
              <svg class="size-4 ml-auto text-[#999]"><use href="#pin"/></svg>
            </div>
            <div class="mt-[9px] flex justify-between">
              <div class="flex-1 mr-[10px] h-[78px] rounded bg-[#353535] p-[5px] flex flex-col">
                <button class="h-[18px] rounded bg-[#676b75] text-white flex items-center pl-[2px]"><span class="size-[14px] mr-[9px] rounded-full bg-[radial-gradient(circle_at_30%_50%,#cfd6cc_25%,#3b403b_85%)]"></span>wood</button>
                <div class="mt-auto flex items-center pl-[5px]"><svg class="size-2 text-[#aaa]"><use href="#tri"/></svg><svg class="w-3 h-[5px] mx-auto"><use href="#grip"/></svg></div>
              </div>
              <div class="w-[18px] flex flex-col">
                <button class="h-[18px] rounded-t bg-[#545454] grid place-items-center" aria-label="Add slot"><svg class="size-3" viewBox="0 0 12 12"><path d="M6 1.500v9M1.500 6h9" stroke="#e6e6e6"/></svg></button>
                <button class="mt-px h-[18px] rounded-b bg-[#545454] grid place-items-center" aria-label="Remove slot"><svg class="size-3" viewBox="0 0 12 12"><path d="M1.500 6.500h9" stroke="#e6e6e6"/></svg></button>
                <button class="mt-[9px] h-[18px] rounded bg-[#282828] grid place-items-center" aria-label="Slot specials"><svg class="w-[10px] h-2"><use href="#chev"/></svg></button>
              </div>
            </div>
            <div class="mt-[6px] h-[19px] flex">
              <button class="w-[30px] rounded-l bg-[#282828] flex items-center justify-center gap-[2px]" aria-label="Browse material"><svg class="size-4"><use href="#material"/></svg><svg class="w-2 h-[6px]"><use href="#chev"/></svg></button>
              <input aria-label="Material name" value="wood" class="min-w-0 flex-1 ml-px bg-[#1d1d1d] pl-[7px] outline-none">
              <button class="w-[26px] bg-[#4a4a4a] text-[#8a8a8a]">5</button>
              <button class="ml-px w-[19px] bg-[#545454] grid place-items-center text-[#999]" aria-label="Fake user"><svg class="size-[15px]"><use href="#shield"/></svg></button>
              <button class="ml-px w-[19px] bg-[#545454] grid place-items-center" aria-label="New material"><svg class="size-[15px]"><use href="#dup"/></svg></button>
              <button class="ml-px w-[19px] rounded-r bg-[#545454] grid place-items-center" aria-label="Unlink"><svg class="size-[15px]"><use href="#x"/></svg></button>
              <button class="ml-[10px] w-[30px] rounded bg-[#282828] flex items-center justify-center gap-[3px]" aria-label="Link"><svg class="size-[15px]"><use href="#mesh"/></svg><svg class="w-2 h-[6px]"><use href="#chev"/></svg></button>
            </div>
            <div class="mt-[7px] h-[18px] grid grid-cols-3 gap-px">
              <button class="rounded-l bg-[#545454]">Assign</button><button class="bg-[#545454]">Select</button><button class="rounded-r bg-[#545454]">Deselect</button>
            </div>
            <h2 class="mt-[13px] h-[18px] flex items-center text-[12px]"><svg class="size-2 mr-[5px] text-[#aaa]"><use href="#tri"/></svg>Preview<svg class="w-3 h-[5px] ml-auto text-[#aaa]"><use href="#grip"/></svg></h2>
            <h2 class="mt-[6px] h-[18px] -mb-[7px] flex items-center text-[12px]"><svg class="size-2 mr-[5px] text-[#aaa]"><use href="#trid"/></svg>Surface<svg class="w-3 h-[5px] ml-auto text-[#aaa]"><use href="#grip"/></svg></h2>
          </div>
          <div class="flex-1 min-h-0 overflow-hidden bg-[#383838] pl-[9px] pr-2 pt-2">
            <button class="w-full h-[18px] rounded bg-[#5277b5] text-white relative">
              <svg class="absolute left-1 top-px size-4"><use href="#nodes"/></svg><span class="pl-[18px]">Use Nodes</span></button>
            <div id="props-list" class="pt-[15px]"></div>
          </div>
        </div>
      </div>
    </section>
  </div>
</div>

<!-- status bar -->
<footer class="h-[19px] shrink-0 bg-[#303030] text-[#b4b4b4] flex items-center pl-[11px] pr-4">
  <svg class="w-3 h-4 mr-[11px]" viewBox="0 0 12 16"><use href="#mouse"/><path d="M1.500 8V4.500Q1.500 1 6 1V8z" fill="currentColor"/></svg><span class="w-[214px]">Annotation Draw</span>
  <svg class="w-3 h-4 mr-[11px]" viewBox="0 0 12 16"><use href="#mouse"/><rect x="4.500" y="3" width="3" height="6" rx="1" fill="currentColor"/></svg><span class="w-[213px]">Rotate View</span>
  <svg class="w-3 h-4 mr-[11px]" viewBox="0 0 12 16"><use href="#mouse"/><path d="M10.500 8V4.500Q10.500 1 6 1V8z" fill="currentColor"/></svg><span class="w-[41px]">Select</span>
  <svg class="w-[17px] h-4 mr-2" viewBox="0 0 17 16"><use href="#mouse" width="12" height="16"/><path d="M10.500 8V4.500Q10.500 1 6 1V8z" fill="currentColor"/><path d="M13 2v5M15.500 1v7" stroke="currentColor"/></svg><span>Move</span>
  <span class="ml-auto">2.91.2</span>
</footer>

<script>
const el = id => document.getElementById(id);
const icon = (name, cls) => `<svg class="${cls}"><use href="#${name}"/></svg>`;

// workspace tabs
const tabs = ['Layout','Modeling','Sculpting','UV Editing','Texture Paint','Shading','Animation','Rendering','Compositing','Scripting'];
el('tabs').innerHTML = tabs.map((t, i) =>
  `<button role="tab" class="px-2 rounded-t ${i ? 'bg-[#2b2b2b] text-[#989898]' : 'bg-[#424242] text-white'}">${t}</button>`).join('') +
  `<button class="w-[18px] rounded-t bg-[#2b2b2b] grid place-items-center" aria-label="Add workspace"><svg class="size-[10px]" viewBox="0 0 10 10"><path d="M5 .5v9M.5 5h9" stroke="#989898"/></svg></button>`;

// viewport menus
el('vmenu').innerHTML = ['View','Select','Add','Mesh','Vertex','Edge','Face','UV'].map(t =>
  `<button class="px-[6px] rounded bg-[#303030]/90">${t}</button>`).join('');

// tool shelf; every drawing uses a 42x35 cell
const W = 'fill="none" stroke="#d0d0d0" stroke-width="1.200"', G = '#8fd9b4', P = '#d5bfe5';
const cube = `<path d="M10 12h15v15H10zM10 12l5-5h15l-5 5M30 7v15l-5 5" ${W}/>`;
const tools = [
  [
    ['Select Box', `<rect x="9.500" y="7" width="21" height="21" fill="none" stroke="#d9a94f" stroke-width="1.500" stroke-dasharray="4 2"/><path d="M17 12l7.500 7.500-4 .8L17 24z" fill="#eee"/>`, 1],
    ['Cursor', `<circle cx="20" cy="17.500" r="11" fill="none" stroke="#eee" stroke-width="1.500"/><circle cx="20" cy="17.500" r="11" fill="none" stroke="#b54747" stroke-width="1.500" stroke-dasharray="5.700 5.800"/><path d="M20 10v5M20 20v5M12.500 17.500h5M22.500 17.500h5" stroke="#999" stroke-width="1.300"/>`]
  ], [
    ['Move', `<path d="M20 5.500l3 5h-6zM20 28.500l3-5h-6zM8.500 17l5-3v6zM31.500 17l-5-3v6z" fill="#eee"/><path d="M20 11v4M20 19v4M14 17h4M22 17h4" stroke="#aaa" stroke-width="1.500"/>`],
    ['Rotate', `<path d="M11 13a9.500 9.500 0 0 1 17.500-.5M29 20a9.500 9.500 0 0 1-17.500.5" ${W}/><path d="M20 12.500l3.500 4-3.500 4-3.500-4z" fill="#bbb"/><path d="M8.500 15.500h6l-3 5zM31.500 17.500h-6l3-5z" fill="#eee"/>`],
    ['Scale', `<path d="M12 16V8.500h15.500V24H20" fill="none" stroke="#aaa" stroke-width="1.200"/><path d="M11 16.500h9v9h-9z" fill="#eee"/><path d="M21 15l4.500-4.500" stroke="#eee" stroke-dasharray="2 1"/><path d="M22 10h4.500v4.500z" fill="#eee"/>`, 1],
    ['Transform', `<circle cx="20" cy="16.500" r="10" ${W} stroke-dasharray="9.700 6" stroke-dashoffset="-3"/><path d="M16 12.500h8v8h-8z" fill="#fff"/><path d="M20 5.500l2.500 4h-5zM20 27.500l2.500-4h-5zM9 16.500l4-2.500v5zM31 16.500l-4-2.500v5z" fill="#eee"/>`]
  ], [
    ['Annotate', `<path d="M12 21L22 10" stroke="#e6e6e6" stroke-width="4"/><circle cx="23" cy="9.500" r="2.300" fill="#e6e6e6"/><path d="M8 25l2-6 4 4z" fill="#e6e6e6"/><path d="M9 25c4 4 9 2 12-1s8-4 12 0" fill="none" stroke="#6ee0a8" stroke-width="1.500"/>`, 1, 1],
    ['Measure', `<path d="M18 25V13a12 12 0 0 1 11 12z" fill="${G}"/><path d="M17 13.500a11 11 0 0 1 9 12" fill="none" stroke="#303030"/><path d="M13 6v23M11 27.500h21" stroke="#eee" stroke-width="3" stroke-dasharray="2 .7"/>`]
  ], [
    ['Extrude Region', `<path d="M10 16v12h15l5-4.500V11M25 16v12" ${W}/><path d="M10 9l5-4h15v7l-5 4H10z" fill="${G}"/><path d="M10 9.500h15l5-4M25 9.500V16" fill="none" stroke="#3d5a4b"/>`, 1],
    ['Inset Faces', `${cube}<path d="M10 12h15v15H10z" fill="${G}"/><path d="M10 12l15 15M25 12L10 27" stroke="#303030"/><path d="M14 16.500h7v6.500h-7z" fill="#303030"/>`],
    ['Bevel', `<path d="M10 17h15v10H10zM30 12v11l-5 4M13 12l4-5h10" ${W}/><path d="M10 17l3-5h10l3-4 4 4-5 5z" fill="${G}"/>`],
    ['Loop Cut', `${cube}<path d="M17.500 27V12l5-5" fill="none" stroke="${G}" stroke-width="1.500"/>`, 1],
    ['Knife', `${cube}<path d="M21.500 7.500L15.500 13l6 13.500" fill="none" stroke="${G}" stroke-width="1.300"/><g fill="${G}"><circle cx="21.500" cy="7.500" r="1.700"/><circle cx="15.500" cy="13" r="1.700"/><circle cx="21.500" cy="26.500" r="1.700"/></g>`, 1],
    ['Poly Build', `<path d="M11.500 26l1-10 5.500-8 5 .5 6 4V26z" fill="${G}"/><g fill="#fff"><circle cx="11.500" cy="26" r="1.700"/><circle cx="29" cy="26" r="1.700"/><circle cx="29" cy="11" r="1.700"/><circle cx="18" cy="7" r="1.700"/><circle cx="11.500" cy="16" r="1.700"/></g>`],
    ['Spin', `<path d="M19 18V7.500A11 11 0 1 0 27.500 11z" fill="${G}"/><path d="M19 18L11 10.500M8 18h22M11 25.500l16-15M19 18v11M19 18l8 8" stroke="#303030"/><path d="M13 8c2-2.500 5-3.500 8.500-3.500V15M27.500 11l2-2a12 12 0 0 1 1.500 9" ${W}/>`, 1],
    ['Smooth', `<rect x="10.500" y="7" width="19" height="18.500" rx="7" fill="${P}"/><path d="M10.500 18H24M17.500 25V12M12 12h13l3-3M25 12c1 5 1 9-1 13M17.500 12l3-4.500M25 18l4.500-3" fill="none" stroke="#303030" stroke-width=".8"/>`, 1],
    ['Edge Slide', `<path d="M16 12h9v15h-9zM16 12l5-5h9l-5 5M30 7v15l-5 5M10 27V12l5-5" ${W}/><path d="M13.500 27V12l5-5" fill="none" stroke="${P}" stroke-width="1.300"/><path d="M10 2l1.500 2 2 1-2 1-1.500 2-1.500-2-2-1 2-1z" fill="${P}"/>`, 1],
    ['Shrink/Fatten', `<path d="M14 12h10v10H14zM14 12l3-2h10l-3 2M27 10v10l-3 2" ${W}/><path d="M20 5l2.500 4h-5zM20 28l2.500-4h-5zM9 16.500l4-2.500v5zM32 16.500l-4-2.500v5zM20 11l1.500 3h-3zM20 22l1.500-3h-3zM15 16.500l3-1.500v3zM25 16.500l-3-1.500v3z" fill="${P}"/>`, 1],
    ['Shear', `<path d="M6 12l6-4h12l10 13-5 5H14z" fill="${P}"/><path d="M6 12.500h14l9 13M20 12.500L24 8" fill="none" stroke="#4a4250"/><path d="M31 2l1.500 2 2 1-2 1L31 8l-1.500-2-2-1 2-1z" fill="${P}"/>`, 1],
    ['Rip Region', `<path d="M15 12l4-5h12v14l-5 5.500H13M26 12v14M15 12h11l5-5M15 12v4" ${W}/><path d="M25 13L7 18l5.500 8" fill="none" stroke="${P}" stroke-width="1.200"/><circle cx="7" cy="18" r="1.800" fill="${P}"/>`, 1]
  ]
];
el('toolbar').innerHTML = tools.map(g => `<div class="rounded overflow-hidden bg-[#303030]">` + g.map(([n, art, more, on]) =>
  `<button title="${n}" class="block w-[42px] h-[35px] border-b border-[#2a2a2a] ${on ? 'bg-[#5680c2]' : 'bg-[#303030]'}"><svg class="w-[42px] h-[35px]" viewBox="0 0 42 35">${art}${more ? '<path d="M39 28v4h-4z" fill="#aaa"/>' : ''}</svg></button>`).join('') + `</div>`).join('');

// playback buttons
el('transport').innerHTML = [
  ['Jump to start', 'M4 3h1.500v10H4zM13 3v10L7 8z'], ['Previous keyframe', 'M5 3.500L9 8l-4 4.500L1 8zM15 3.500v9L10 8z'],
  ['Play reversed', 'M12.500 2v12L3.500 8z'], ['Play', 'M3.500 2v12L12.500 8z'],
  ['Next keyframe', 'M11 3.500L15 8l-4 4.500L7 8zM1 3.500v9L6 8z'], ['Jump to end', 'M10.500 3H12v10h-1.500zM3 3v10l6-5z']
].map(([n, d], i) => `<button aria-label="${n}" class="w-[19px] bg-[#545454] grid place-items-center ${i === 0 ? 'rounded-l' : ''} ${i === 5 ? 'rounded-r' : ''}"><svg class="size-4" viewBox="0 0 16 16"><path d="${d}" fill="currentColor"/></svg></button>`).join('');

// frame ruler
const fx = f => Math.round(108.8 + f * 5.448);
let r = `<rect width="100%" height="23" fill="#282828"/><rect y="23" width="100%" height="28" fill="#353535"/><rect x="${fx(1)}" y="23" width="${fx(250) - fx(1)}" height="28" fill="#424242"/>`;
for (let f = -15; f <= 265; f += 5) {
  const major = f % 10 === 0;
  r += `<path d="M${fx(f) + .5} 23v28" stroke="${f === 250 ? '#000' : major ? '#2b2b2b' : '#393939'}"/>`;
  if (major && f) r += `<text x="${fx(f) - 1}" y="16" text-anchor="middle" fill="#a8a8a8">${f}</text>`;
}
r += `<rect x="101" y="3" width="25" height="17" rx="4" fill="#5680c2"/><path d="M114 20v31" stroke="#5680c2" stroke-width="2"/><text x="113" y="16" text-anchor="middle" fill="#fff">1</text>`;
el('ruler').innerHTML = r;

// outliner tree
const rows = [
  ['obj','Empty.005','empty',1,1],['obj','Empty.006','empty',1,1],['obj','Empty.011','empty',1,0],
  ['coll','bed','',1,0],['obj','Empty.007','empty',1,1],['obj','Empty.008','empty',1,1],['obj','Empty.009','empty',1,1],['obj','Empty.010','empty',1,0],
  ['coll','kast','',0,1],['obj','backplank','mesh',0,1],['obj','bottom plank','mesh',0,1],['obj','Empty','empty',0,1],
  ['obj','front plank.001','mod',0,1],['obj','side plank','mod',0,1],['obj','top plank','mesh',0,1],['top','Sphere','mod',0,1]
];
el('outliner').innerHTML = rows.map(([kind, name, type, dim, vis], i) => {
  const sel = name === 'front plank.001', coll = kind === 'coll', top = kind === 'top';
  const bg = sel ? 'bg-[#3b578c]' : i % 2 ? 'bg-[#282828]' : 'bg-[#2d2d2d]';
  const mark = sel ? icon('editmode', 'size-4 text-[#aab]') : (type === 'mesh' || type === 'mod') ? '<span class="size-1 rounded-full bg-[#ddd]"></span>' : '';
  const main = coll ? icon('coll', 'size-4 text-[#ddd]') : `<span class="w-5 h-[18px] -mx-[2px] rounded grid place-items-center text-[#cf8a4f] ${sel ? 'bg-[#8088a5]/60' : ''}">${icon(type === 'empty' ? 'empty' : 'meshobj', 'size-4')}</span>`;
  let data = '';
  if (type === 'empty') data = icon('image', 'size-4 ml-[23px] text-[#cc6670]');
  if (type === 'mesh') data = icon('mesh', 'size-4 ml-[23px] text-[#13b78c]');
  if (type === 'mod') data = icon('wrench', 'size-4 ml-[23px] text-[#7396d8]') + `<span class="w-5 h-[18px] ml-[2px] rounded grid place-items-center text-[#13b78c] ${sel ? 'bg-[#3f7f8f]/70' : ''}">${icon('mesh', 'size-4')}</span>`;
  return `<li class="h-5 flex items-center pr-2 ${bg}">
    <span class="w-5 grid place-items-center">${mark}</span>
    <span class="h-5 w-[30px] grid place-items-end">${coll || top ? '' : '<span class="w-px h-5 bg-[#666]"></span>'}</span>
    <span class="flex items-center flex-1 min-w-0 ${dim ? 'opacity-50' : ''} ${coll || top ? '-ml-1' : 'ml-4'}">
      ${icon(coll ? 'trid' : 'tri', 'size-2 mr-2 text-[#bbb]')}${main}<span class="ml-[6px] pt-[2px] whitespace-nowrap ${sel ? 'text-[#ffaf29]' : ''}">${name}</span>${data}
    </span>
    ${coll ? `<label class="relative mr-2 size-[11px]"><input type="checkbox" checked aria-label="Include ${name}" class="block appearance-none size-[11px] bg-[#e6e6e6] rounded-[1px]"><svg class="absolute inset-0 size-[11px] pointer-events-none" viewBox="0 0 11 11"><path d="M2 5.500L4.500 8 9 2.500" fill="none" stroke="#222" stroke-width="1.800"/></svg></label>` : ''}
    <button aria-label="Visibility of ${name}" class="${dim ? 'opacity-60' : ''}">${icon(vis ? 'eye' : 'eyeclosed', 'block w-4 h-3')}</button></li>`;
}).join('');

// property editor tabs
el('ptabs').innerHTML = [
  ['tool','text-[#ccc]','mb-2'],['render','text-[#ccc]',''],['output','text-[#ccc]',''],['layers','text-[#ccc]',''],['scene','text-[#ccc]',''],['world','text-[#d05a66]','mb-2'],
  ['object','text-[#d68a4b]',''],['wrench','text-[#6f96d6] [--wf:#6f96d6]',''],['particles','text-[#6f96d6]',''],['physics','text-[#6f96d6]',''],['constraint','text-[#6f96d6]',''],['mesh','text-[#13b78c]',''],['material','text-[#e86a74]','']
].map(([n, c, m]) => `<button aria-label="${n}" class="h-[26px] shrink-0 rounded-l grid place-items-center ${n === 'material' ? 'bg-[#424242]' : 'bg-[#2b2b2b]'} ${m}">${icon(n, 'size-4 ' + c)}</button>`).join('');

// shader inputs
const dot = '<span class="ml-2 size-1 rounded-full bg-[#ccc]"></span>';
const socket = (c, solo) => `<span class="w-5 h-5 shrink-0 bg-[#282828] border border-[#464646] grid place-items-center ${solo ? 'rounded' : 'rounded-l'}"><span class="size-2 rounded-full ${c}"></span></span>`;
const field = (label, v, cls, fill) => `<input aria-label="${label}" value="${v}" class="min-w-0 flex-1 h-5 bg-[#545454] border border-[#464646] pr-[2px] text-center outline-none ${cls}" ${fill ? `style="background-image:linear-gradient(to right,#5680c2 ${fill}%,transparent ${fill}%)"` : ''}>`;
const row = (label, body, d = dot) => `<div class="h-[25px] flex items-center"><span class="w-[97px] mr-[9px] text-right whitespace-nowrap">${label}</span><div class="w-[161px] flex">${body}</div>${d}</div>`;
const gray = 'bg-[#a1a1a1]', yel = 'bg-[#c7c729]';
const drop = t => `<div class="relative flex-1"><select aria-label="${t}" class="block w-full h-5 rounded bg-[#282828] border border-[#464646] appearance-none pl-[7px] outline-none"><option>${t}</option></select><svg class="absolute right-[3px] top-2 w-2 h-[6px] pointer-events-none"><use href="#chev"/></svg></div>`;
const num = (l, v, f) => row(l, socket(gray) + field(l, v, 'rounded-r', f));
el('props-list').innerHTML =
  row('Surface', `<button class="flex-1 h-5 rounded bg-[#282828] border border-[#464646] flex items-center pl-[5px]"><span class="size-2 mr-[7px] rounded-full bg-[#63c763]"></span>Principled BSDF</button>`, '') +
  `<div class="h-[11px]"></div>` +
  row('', drop('GGX')) + row('', drop('Christensen-Burley')) +
  row('Base Color', socket(yel) + '<input readonly aria-label="Base Color" class="min-w-0 flex-1 h-[19px] rounded-r bg-[#a9b3a6]">') +
  num('Subsurface', '0.000') +
  `<div class="flex pt-[2px] h-[65px]"><span class="w-[97px] mr-[9px] mt-[3px] text-right whitespace-nowrap">Subsurface Radius</span>${socket('bg-[#6363c7]', 1)}<div class="ml-[6px] w-[135px] flex flex-col">${['0.000','0.200','0.100'].map((v, i) => `<input aria-label="Subsurface Radius ${i + 1}" value="${v}" class="w-full h-5 bg-[#545454] border-x border-b border-[#464646] pr-[2px] text-center outline-none ${['rounded-t','','rounded-b'][i]}">`).join('')}</div><div class="flex flex-col gap-4 pt-2">${dot}${dot}${dot}</div></div>` +
  row('Subsurface Color', socket(yel) + '<input readonly aria-label="Subsurface Color" class="min-w-0 flex-1 h-[19px] rounded-r bg-[#e7e7e7]">') +
  num('Metallic', '0.000') + num('Specular', '0.100', 9) + num('Specular Tint', '0.000') + num('Roughness', '0.800', 80) +
  num('Anisotropic', '0.000') + num('Anisotropic Rotati...', '0.000') + num('Sheen', '0.000');
</script>
</body>
</html>
